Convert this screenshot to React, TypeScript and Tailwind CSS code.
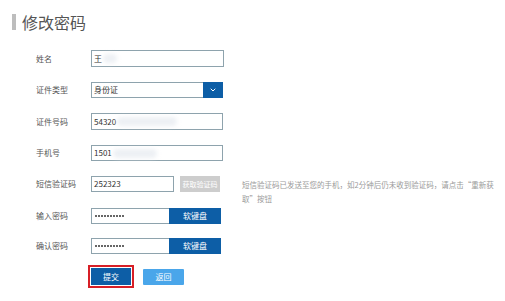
import { ChevronDown } from "lucide-react";

const FONT = "font-['Noto_Sans_CJK_SC','Noto_Sans',sans-serif]";

const Label = ({ text }: { text: string }): JSX.Element => (
  <span className="w-[55px] shrink-0 self-center text-[8px] leading-none text-[#555]">{text}</span>
);

const Blur = ({ width }: { width: number }): JSX.Element => (
  <span className="ml-[1px] inline-block h-[9px] rounded-full bg-[#edf0f4] blur-[2px]" style={{ width }} />
);

const TextBox = ({
  value,
  blur,
  className,
}: {
  value: string;
  blur?: number;
  className: string;
}): JSX.Element => (
  <div
    className={`flex h-full shrink-0 items-center border border-[#8ea3ad] bg-white px-[2px] text-[8px] leading-none text-[#333] ${className}`}
  >
    <span>{value}</span>
    {blur ? <Blur width={blur} /> : null}
  </div>
);

const PasswordRow = ({ label, mt }: { label: string; mt: string }): JSX.Element => (
  <div className={`flex h-[16px] items-center ${mt}`}>
    <Label text={label} />
    <div className="flex h-full w-[78px] items-center gap-[1px] border border-r-0 border-[#8ea3ad] bg-white px-[3px]">
      {Array.from({ length: 10 }).map((_, i) => (
        <span key={i} className="h-[2px] w-[2px] rounded-full bg-[#333]" />
      ))}
    </div>
    <button
      type="button"
      className="flex h-full w-[52px] items-center justify-center bg-[#0d5ea6] text-[8px] leading-none text-white"
    >
      软键盘
    </button>
  </div>
);

const App = (): JSX.Element => {
  return (
    <div className={`h-[301px] w-[505px] overflow-hidden bg-white ${FONT}`}>
      <div className="flex items-center pl-[12px] pt-[13px]">
        <span className="h-[16px] w-[4px] bg-[#bdbdbd]" />
        <span className="ml-[6px] text-[16px] leading-[18px] text-[#555]">修改密码</span>
      </div>

      <div className="flex flex-col pl-[36px] pt-[19px]">
        <div className="flex h-[17px] items-center">
          <Label text="姓名" />
          <TextBox value="王" blur={14} className="w-[133px]" />
        </div>

        <div className="mt-[15px] flex h-[16px] items-center">
          <Label text="证件类型" />
          <div className="flex h-full w-[132px] items-center border border-r-0 border-[#8ea3ad] bg-white">
            <span className="flex-1 px-[2px] text-[8px] leading-none text-[#333]">身份证</span>
            <span className="flex h-[16px] w-[20px] items-center justify-center bg-[#0d5ea6]">
              <ChevronDown className="h-[8px] w-[8px] text-white" strokeWidth={3} />
            </span>
          </div>
        </div>

        <div className="mt-[15px] flex h-[17px] items-center">
          <Label text="证件号码" />
          <TextBox value="54320" blur={60} className="w-[132px]" />
        </div>

        <div className="mt-[15px] flex h-[16px] items-center">
          <Label text="手机号" />
          <TextBox value="1501" blur={44} className="w-[132px]" />
        </div>

        <div className="mt-[15px] flex h-[16px] items-start">
          <Label text="短信验证码" />
          <TextBox value="252323" className="w-[83px]" />
          <button
            type="button"
            className="ml-[6px] flex h-full w-[40px] shrink-0 items-center justify-center bg-[#cdcdcd] text-[7px] leading-none text-white"
          >
            获取验证码
          </button>
          <p className="ml-[22px] mt-[2px] shrink-0 whitespace-nowrap text-[7.5px] leading-[14px] text-[#9a9a9a]">
            短信验证码已发送至您的手机，如2分钟后仍未收到验证码，请点击“重新获
            <br />
            取”按钮
          </p>
        </div>

        <PasswordRow label="输入密码" mt="mt-[16px]" />
        <PasswordRow label="确认密码" mt="mt-[14px]" />

        <div className="ml-[52px] mt-[11px] flex items-center">
          <div className="border-[2px] border-[#d71f26] p-[1px]">
            <button
              type="button"
              className="flex h-[17px] w-[40px] items-center justify-center bg-[#0d5ea6] text-[8px] leading-none text-white"
            >
              提交
            </button>
          </div>
          <button
            type="button"
            className="ml-[9px] flex h-[16px] w-[41px] items-center justify-center rounded-[1px] bg-[#4aa6ea] text-[8px] leading-none text-white"
          >
            返回
          </button>
        </div>
      </div>
    </div>
  );
};

export default App;
